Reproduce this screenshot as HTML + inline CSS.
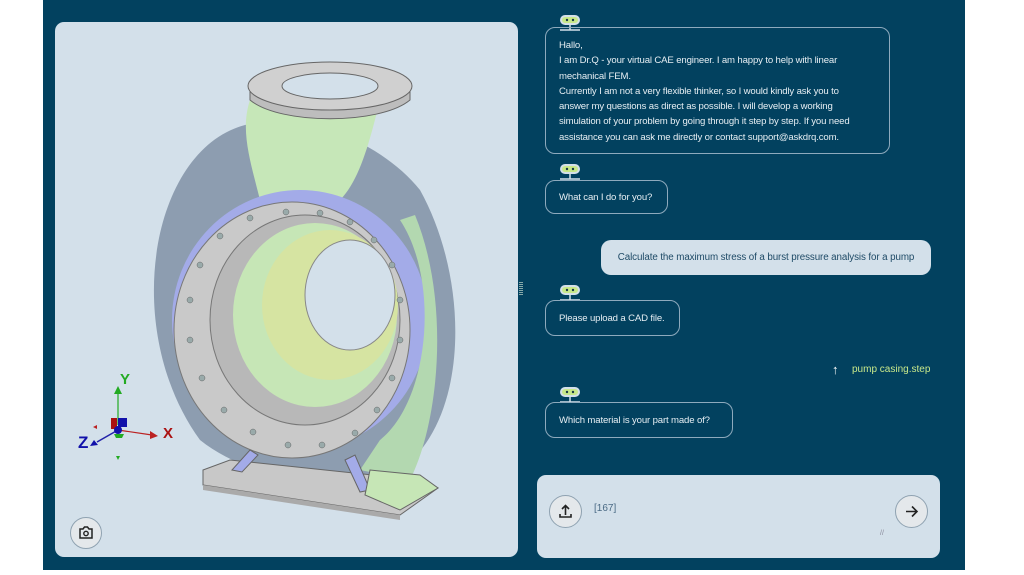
<!DOCTYPE html>
<html><head><meta charset="utf-8"><style>
body{margin:0;width:1024px;height:575px;background:#fff;position:relative;overflow:hidden;font-family:"Liberation Sans",sans-serif}
.main{position:absolute;left:43px;top:0;width:922px;height:570px;background:#02415f}
.left{position:absolute;left:55px;top:22px;width:463px;height:535px;background:#d3e0ea;border-radius:9px;overflow:hidden}
.b{position:absolute;border:1px solid #8eaabd;border-radius:10px;color:#e6eef3;font-size:9.6px;letter-spacing:-0.15px;line-height:15.3px;padding:9px 13px;box-sizing:border-box}
.n{white-space:nowrap;line-height:16px}
.bot{position:absolute;width:26px;height:20px}
.u{position:absolute;left:601px;top:240px;width:330px;height:35px;background:#d3e0ea;border-radius:10px;color:#1e4a66;font-size:9.8px;letter-spacing:-0.1px;line-height:35px;text-align:center;white-space:nowrap}
.inp{position:absolute;left:537px;top:475px;width:403px;height:83px;background:#d3e0ea;border-radius:9px}
.circ{position:absolute;width:31px;height:31px;border-radius:50%;border:1px solid #8fa2b1;background:#e4e8eb;box-sizing:border-box}
</style></head><body>
<div class="main"></div>
<div class="left">
<svg width="463" height="535" viewBox="55 22 463 535" style="position:absolute;left:0;top:0">
<path d="M245 125 C150 150 120 330 200 440 C250 480 330 490 400 470 C470 420 470 280 420 190 C380 140 300 110 245 125Z" fill="#8d9db0"/>
<path d="M250 100 L380 100 C370 140 360 180 340 200 L260 200 C250 160 240 130 250 100Z" fill="#c6e7b8"/>
<ellipse cx="300" cy="320" rx="128" ry="130" fill="#a3abe8"/>
<path d="M400 220 C440 280 430 400 380 440 L360 470 L410 480 C440 420 450 300 415 215Z" fill="#b3d8b0"/>
<ellipse cx="292" cy="330" rx="118" ry="128" fill="#c9c9c9" stroke="#777" stroke-width="1"/>
<ellipse cx="305" cy="320" rx="95" ry="105" fill="#b8b8b8" stroke="#777"/>
<ellipse cx="315" cy="315" rx="82" ry="92" fill="#c6e6b6"/>
<ellipse cx="330" cy="305" rx="68" ry="75" fill="#d6e4a2"/>
<ellipse cx="350" cy="295" rx="45" ry="55" fill="#d3e0ea" stroke="#888"/>
<g fill="#9aa" stroke="#666" stroke-width=".5">
<circle cx="286" cy="212" r="3"/><circle cx="320" cy="213" r="3"/><circle cx="350" cy="222" r="3"/><circle cx="374" cy="240" r="3"/><circle cx="392" cy="265" r="3"/><circle cx="400" cy="300" r="3"/><circle cx="400" cy="340" r="3"/><circle cx="392" cy="378" r="3"/><circle cx="377" cy="410" r="3"/><circle cx="355" cy="433" r="3"/><circle cx="322" cy="445" r="3"/><circle cx="288" cy="445" r="3"/><circle cx="253" cy="432" r="3"/><circle cx="224" cy="410" r="3"/><circle cx="202" cy="378" r="3"/><circle cx="190" cy="340" r="3"/><circle cx="190" cy="300" r="3"/><circle cx="200" cy="265" r="3"/><circle cx="220" cy="236" r="3"/><circle cx="250" cy="218" r="3"/></g>
<path d="M250 85 L410 85 L410 100 C380 125 280 125 250 100Z" fill="#bdbdbd" stroke="#666"/>
<ellipse cx="330" cy="86" rx="82" ry="24" fill="#d0d0d0" stroke="#666"/>
<ellipse cx="330" cy="86" rx="48" ry="13" fill="#d3e0ea" stroke="#666"/>
<path d="M203 470 L230 460 L420 480 L438 488 L400 515 L203 485Z" fill="#c8c8c8" stroke="#666"/>
<path d="M203 485 L400 515 L400 520 L203 490Z" fill="#aaa"/>
<path d="M232 470 L250 450 L258 455 L242 472Z M345 460 L355 455 L370 490 L360 492Z" fill="#a3abe8" stroke="#666"/>
<path d="M370 470 L420 475 L438 488 L400 510 L365 495Z" fill="#c6e6b6" stroke="#666"/>
<g font-family="Liberation Sans" font-weight="bold" font-size="15">
<line x1="118" y1="425" x2="118" y2="393" stroke="#2a2" stroke-width="1.2"/><path d="M114 394 L118 386 L122 394Z" fill="#2a2"/><text x="120" y="384" fill="#2a2">Y</text>
<line x1="118" y1="430" x2="152" y2="435" stroke="#b22" stroke-width="1.2"/><path d="M150 431 L158 436 L150 439Z" fill="#b22"/><text x="163" y="438" fill="#a11">X</text>
<line x1="118" y1="430" x2="97" y2="442" stroke="#22a" stroke-width="1.5"/><path d="M94 440 L90 446 L98 445Z" fill="#11a"/><text x="78" y="448" fill="#11a" font-size="17">Z</text>
<rect x="111" y="418" width="6" height="11" fill="#a11"/><rect x="118" y="418" width="9" height="9" fill="#11a"/><circle cx="118" cy="430" r="4" fill="#11a"/><path d="M114 434 L124 434 L122 438 L116 438Z" fill="#2a2"/>
<path d="M116 456 L120 456 L118 460Z" fill="#2a2"/><path d="M93 427 L97 425 L97 429Z" fill="#b22"/></g>
</svg>
<div class="circ" style="left:15px;top:495px;width:32px;height:32px"><svg width="30" height="30" viewBox="0 0 30 30"><path d="M9 11h3l1.5-2h3L18 11h3v9H9z" fill="none" stroke="#222" stroke-width="1.5"/><circle cx="15" cy="15.5" r="2.2" fill="none" stroke="#222" stroke-width="1.4"/></svg></div>
</div>
<div style="position:absolute;left:519px;top:282px;width:4px;height:14px;background:repeating-linear-gradient(#8aa 0 1px,transparent 1px 2px)"></div>

<svg class="bot" style="left:557px;top:14px" viewBox="0 0 26 20"><rect x="3" y="1" width="20" height="10" rx="5" fill="#d3e0ea"/><rect x="5" y="3" width="16" height="6" rx="3" fill="#c8e88a"/><circle cx="10" cy="6" r="1.2" fill="#1a3a4a"/><circle cx="16" cy="6" r="1.2" fill="#1a3a4a"/><path d="M13 11v5M3 16h20" stroke="#d3e0ea" stroke-width="1.5"/></svg>
<div class="b" style="left:545px;top:27px;width:345px;height:127px;padding-top:10px">Hallo,<br>I am Dr.Q - your virtual CAE engineer. I am happy to help with linear<br>mechanical FEM.<br>Currently I am not a very flexible thinker, so I would kindly ask you to<br>answer my questions as direct as possible. I will develop a working<br>simulation of your problem by going through it step by step. If you need<br>assistance you can ask me directly or contact support@askdrq.com.</div>
<svg class="bot" style="left:557px;top:163px" viewBox="0 0 26 20"><rect x="3" y="1" width="20" height="10" rx="5" fill="#d3e0ea"/><rect x="5" y="3" width="16" height="6" rx="3" fill="#c8e88a"/><circle cx="10" cy="6" r="1.2" fill="#1a3a4a"/><circle cx="16" cy="6" r="1.2" fill="#1a3a4a"/><path d="M13 11v5M3 16h20" stroke="#d3e0ea" stroke-width="1.5"/></svg>
<div class="b n" style="left:545px;top:180px;width:123px;height:34px">What can I do for you?</div>
<div class="u">Calculate the maximum stress of a burst pressure analysis for a pump</div>
<svg class="bot" style="left:557px;top:284px" viewBox="0 0 26 20"><rect x="3" y="1" width="20" height="10" rx="5" fill="#d3e0ea"/><rect x="5" y="3" width="16" height="6" rx="3" fill="#c8e88a"/><circle cx="10" cy="6" r="1.2" fill="#1a3a4a"/><circle cx="16" cy="6" r="1.2" fill="#1a3a4a"/><path d="M13 11v5M3 16h20" stroke="#d3e0ea" stroke-width="1.5"/></svg>
<div class="b n" style="left:545px;top:300px;width:135px;height:36px;padding-top:10px">Please upload a CAD file.</div>
<div style="position:absolute;left:832px;top:362px;color:#fff;font-size:13px">&#8593;</div>
<div style="position:absolute;left:852px;top:364px;color:#c8e88a;font-size:10px">pump casing.step</div>
<svg class="bot" style="left:557px;top:386px" viewBox="0 0 26 20"><rect x="3" y="1" width="20" height="10" rx="5" fill="#d3e0ea"/><rect x="5" y="3" width="16" height="6" rx="3" fill="#c8e88a"/><circle cx="10" cy="6" r="1.2" fill="#1a3a4a"/><circle cx="16" cy="6" r="1.2" fill="#1a3a4a"/><path d="M13 11v5M3 16h20" stroke="#d3e0ea" stroke-width="1.5"/></svg>
<div class="b n" style="left:545px;top:402px;width:188px;height:36px;padding-top:10px">Which material is your part made of?</div>
<div class="inp"></div>
<div class="circ" style="left:549px;top:495px;width:33px;height:33px"><svg width="31" height="31" viewBox="0 0 31 31"><path d="M15.5 19V10M12 13l3.5-3.5L19 13M10 18v3h11v-3" fill="none" stroke="#222" stroke-width="1.6"/></svg></div>
<div style="position:absolute;left:594px;top:503px;color:#4a6a85;font-size:10px">[167]</div>
<div style="position:absolute;left:880px;top:530px;color:#889;font-size:7px">//</div>
<div class="circ" style="left:895px;top:495px;width:33px;height:33px"><svg width="31" height="31" viewBox="0 0 31 31"><path d="M10 15.5h11M16 10.5l5 5-5 5" fill="none" stroke="#222" stroke-width="1.6"/></svg></div>
</body></html>
